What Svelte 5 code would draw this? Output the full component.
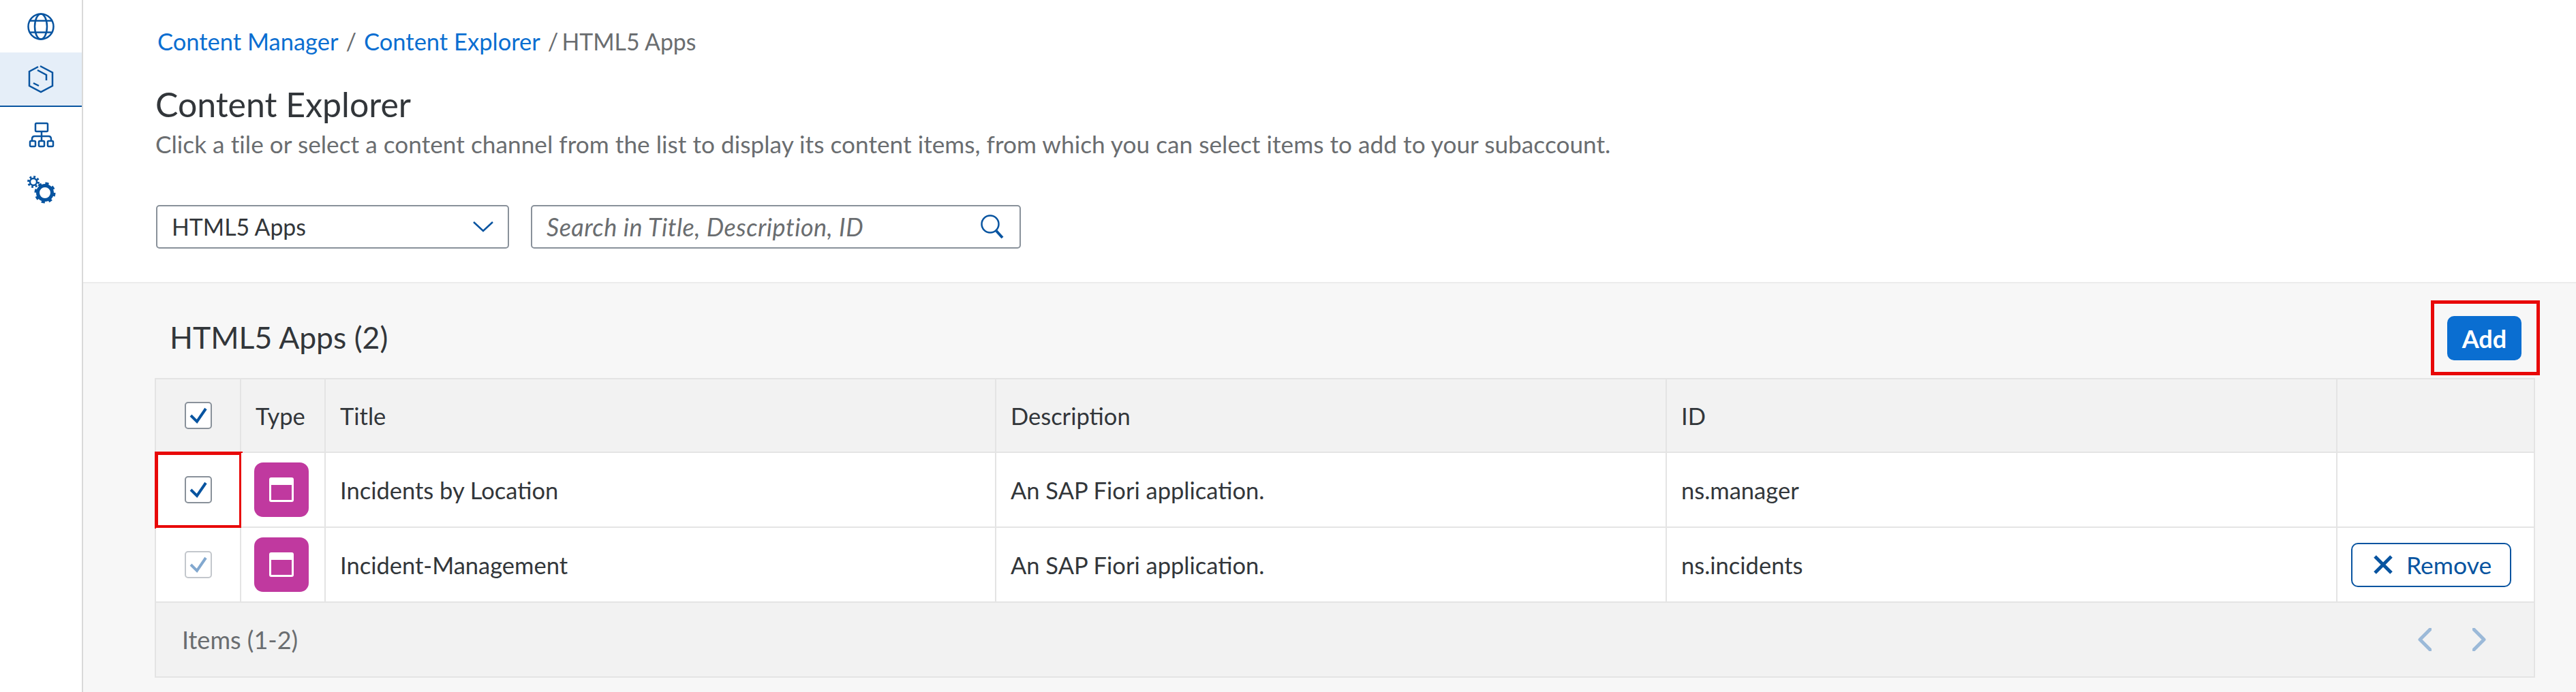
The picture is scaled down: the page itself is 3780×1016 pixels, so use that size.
<script>
  const rows = [
    { title: "Incidents by Location", id: "ns.manager", marked: true },
    { title: "Incident-Management", id: "ns.incidents", added: true },
  ];
</script>

<div class="shell">
  <nav class="side">
    <div class="nav-item first">
      <svg viewBox="0 0 48 48" class="ico">
        <circle cx="24" cy="24" r="18.5" />
        <ellipse cx="24" cy="24" rx="9" ry="18.5" />
        <path d="M8 15.5h32M8 32.500h32" />
      </svg>
    </div>
    <div class="nav-item active">
      <svg viewBox="0 0 48 48" class="ico">
        <path d="M23 5l18 9.500v19.500l-17 9-17-9v-21l13-7" />
        <path d="M19 11l13 7v8M13 30l8 4" />
      </svg>
    </div>
    <div class="nav-item">
      <svg viewBox="0 0 48 48" class="ico">
        <rect x="16" y="8" width="18" height="12" rx="1.500" />
        <path d="M25 20v13M11 33v-2q0-4 4-4h20q4 0 4 4v2" />
        <rect x="8" y="34" width="8" height="8" rx="1.500" />
        <rect x="21" y="34" width="8" height="8" rx="1.500" />
        <rect x="34" y="34" width="8" height="8" rx="1.500" />
      </svg>
    </div>
    <div class="nav-item">
      <svg viewBox="0 0 48 48" class="ico">
        <circle cx="30" cy="30" r="10.500" stroke-width="5" />
        <circle cx="30" cy="30" r="13.500" stroke-width="4" stroke-dasharray="5 5.600" />
        <circle cx="13" cy="14" r="5" stroke-width="2.500" />
        <circle cx="13" cy="14" r="7.500" stroke-width="3" stroke-dasharray="2.900 2.990" />
      </svg>
    </div>
  </nav>

  <main class="main">
    <header class="top">
      <div class="crumbs">
        <span class="link">Content Manager</span><span class="sep">/</span><span class="link">Content Explorer</span><span class="sep">/</span><span class="caps last">HTML5 Apps</span>
      </div>
      <h1>Content Explorer</h1>
      <p class="desc">Click a tile or select a content channel from the list to display its content items, from which you can select items to add to your subaccount.</p>
      <div class="filters">
        <div class="field select">
          <span class="caps">HTML5 Apps</span>
          <svg viewBox="0 0 30 16" class="chev"><path d="M1 1l14 13L29 1" /></svg>
        </div>
        <div class="field search">
          <span class="ph">Search in Title, Description, ID</span>
          <svg viewBox="0 0 36 36" class="lens"><circle cx="15" cy="14" r="12.500" /><path d="M24 24l9 10" class="handle" /></svg>
        </div>
      </div>
    </header>

    <section class="content">
      <div class="head">
        <h2>HTML5 Apps (2)</h2>
        <div class="add-wrap">
          <button class="add">Add</button>
          <span class="mark add-mark"></span>
        </div>
      </div>

      <div class="table">
        <div class="cell th center">
          <span class="check"><svg viewBox="0 0 40 40"><path d="M9 20l9 9L31 10" /></svg></span>
        </div>
        <div class="cell th">Type</div>
        <div class="cell th">Title</div>
        <div class="cell th">Description</div>
        <div class="cell th">ID</div>
        <div class="cell th"></div>

        {#each rows as row}
          <div class="cell center">
            <span class="check" class:off={row.added}><svg viewBox="0 0 40 40"><path d="M9 20l9 9L31 10" /></svg></span>
            {#if row.marked}<span class="mark row-mark"></span>{/if}
          </div>
          <div class="cell">
            <span class="tile">
              <svg viewBox="0 0 36 36"><rect x="1.500" y="1.500" width="33" height="33" rx="1.500" /><rect x="1" y="1" width="34" height="10" rx="1" class="bar" /></svg>
            </span>
          </div>
          <div class="cell">{row.title}</div>
          <div class="cell">An SAP Fiori application.</div>
          <div class="cell">{row.id}</div>
          <div class="cell">
            {#if row.added}
              <button class="remove">
                <svg viewBox="0 0 28 28"><path d="M2 2l24 24M26 2L2 26" /></svg>
                Remove
              </button>
            {/if}
          </div>
        {/each}

        <div class="foot">
          <span>Items (1-2)</span>
          <div class="pager">
            <svg viewBox="0 0 20 34"><path d="M18 2L3 17l15 15" /></svg>
            <svg viewBox="0 0 20 34"><path d="M2 2l15 15L2 32" /></svg>
          </div>
        </div>
      </div>
    </section>
  </main>
</div>

<style>
  :global(body) {
    margin: 0;
    background: #fff;
  }

  .shell {
    display: flex;
    height: 1016px;
    overflow: hidden;
    font-family: Lato, sans-serif;
    font-size: 34.5px;
    color: #32363a;
  }

  .side {
    flex: 0 0 120px;
    border-right: 2px solid #d9d9d9;
    display: flex;
    flex-direction: column;
  }

  .nav-item {
    height: 80px;
    display: flex;
    align-items: center;
    justify-content: center;
    box-sizing: border-box;
  }

  .nav-item.first {
    height: 77px;
  }

  .nav-item.active {
    background: #e5eef8;
    border-bottom: 2px solid #0854a0;
  }

  .ico {
    width: 48px;
    height: 48px;
    fill: none;
    stroke: #0854a0;
    stroke-width: 2.500;
  }

  .main {
    flex: 1;
    min-width: 0;
    display: flex;
    flex-direction: column;
  }

  .top {
    height: 414px;
    box-sizing: border-box;
    padding: 36px 0 0 106px;
  }

  .crumbs {
    display: flex;
    line-height: 50px;
    padding-left: 3px;
    color: #6a6d70;
  }

  .link {
    color: #0a6ed1;
  }

  .caps {
    font-size: 33.8px;
  }

  .last {
    margin-left: -6px;
  }

  .sep {
    margin: 0 11px;
  }

  h1 {
    margin: 36px 0 0;
    font-size: 50px;
    line-height: 62px;
    font-weight: 400;
  }

  .desc {
    margin: 2px 0 0;
    line-height: 50px;
    font-size: 35.2px;
    letter-spacing: 0.03px;
    color: #6a6d70;
  }

  .filters {
    display: flex;
    gap: 32px;
    margin-top: 65px;
    padding-left: 1px;
  }

  .field {
    height: 64px;
    box-sizing: border-box;
    border: 2px solid #89919a;
    border-radius: 5px;
    display: flex;
    align-items: center;
    justify-content: space-between;
    padding: 0 21px;
    background: #fff;
  }

  .select {
    width: 518px;
  }

  .search {
    width: 719px;
    padding-right: 22px;
  }

  .ph {
    font-style: italic;
    font-size: 36px;
    letter-spacing: 0.48px;
    color: #6a6d70;
  }

  .chev {
    width: 30px;
    height: 16px;
    fill: none;
    stroke: #0854a0;
    stroke-width: 2.500;
  }

  .lens {
    width: 36px;
    height: 36px;
    fill: none;
    stroke: #0854a0;
    stroke-width: 2.500;
  }

  .lens .handle {
    stroke-width: 4;
  }

  .content {
    flex: 1;
    background: #f7f7f7;
    border-top: 2px solid #ececec;
    padding: 0 60px 0 105px;
  }

  .head {
    height: 139px;
    box-sizing: border-box;
    padding: 22px 20px 0 22px;
    display: flex;
    align-items: center;
    justify-content: space-between;
  }

  h2 {
    margin: 0 0 5px;
    font-size: 44.5px;
    font-weight: 400;
  }

  .add-wrap {
    position: relative;
    display: flex;
  }

  .add {
    width: 109px;
    height: 65px;
    border: 0;
    border-radius: 10px;
    background: #0a6ed1;
    color: #fff;
    font: 700 36px Lato, sans-serif;
    padding: 0;
  }

  .mark {
    position: absolute;
    box-sizing: border-box;
    border: 5px solid #e80808;
    pointer-events: none;
  }

  .add-mark {
    left: -24px;
    top: -23px;
    width: 160px;
    height: 110px;
  }

  .table {
    display: grid;
    grid-template-columns: 125px 124px 984px 984px 984px 290px;
    grid-template-rows: 108px 110px 110px 108px;
    border: solid #e4e4e4;
    border-width: 2px 0 2px 2px;
    box-sizing: border-box;
  }

  .cell {
    position: relative;
    display: flex;
    align-items: center;
    padding-left: 21px;
    box-sizing: border-box;
    background: #fff;
    border-right: 2px solid #e4e4e4;
    border-bottom: 2px solid #e4e4e4;
    min-width: 0;
  }

  .cell.th {
    background: #f2f2f2;
  }

  .cell.center {
    justify-content: center;
    padding-left: 0;
  }

  .check {
    width: 40px;
    height: 40px;
    box-sizing: border-box;
    border: 2px solid #89919a;
    border-radius: 5px;
    background: #fff;
    display: flex;
  }

  .check svg {
    width: 40px;
    height: 40px;
    margin: -2px;
    flex: none;
    fill: none;
    stroke: #0854a0;
    stroke-width: 4;
  }

  .check.off {
    opacity: 0.5;
  }

  .row-mark {
    left: -2px;
    top: -2px;
    width: 129px;
    height: 113px;
  }

  .tile {
    width: 80px;
    height: 80px;
    margin-left: -2px;
    border-radius: 13px;
    background: #c0399f;
    display: flex;
    align-items: center;
    justify-content: center;
  }

  .tile svg {
    width: 36px;
    height: 36px;
    fill: none;
    stroke: #fff;
    stroke-width: 3;
  }

  .tile .bar {
    fill: #fff;
    stroke: none;
  }

  .remove {
    width: 235px;
    height: 65px;
    margin-left: -1px;
    box-sizing: border-box;
    border: 2px solid #0854a0;
    border-radius: 10px;
    background: #fff;
    color: #0854a0;
    font: 400 35.5px Lato, sans-serif;
    display: flex;
    align-items: center;
    gap: 20px;
    padding: 0 0 0 31px;
  }

  .remove svg {
    width: 28px;
    height: 28px;
    flex: none;
    fill: none;
    stroke: #0854a0;
    stroke-width: 5;
  }

  .foot {
    grid-column: 1 / -1;
    background: #f2f2f2;
    border-right: 2px solid #e4e4e4;
    display: flex;
    align-items: center;
    justify-content: space-between;
    padding: 0 70px 0 38px;
    font-size: 36px;
    color: #6a6d70;
  }

  .pager {
    display: flex;
    gap: 60px;
  }

  .pager svg {
    width: 20px;
    height: 34px;
    fill: none;
    stroke: #9bb9d8;
    stroke-width: 5;
    stroke-linecap: round;
    stroke-linejoin: round;
  }
</style>
